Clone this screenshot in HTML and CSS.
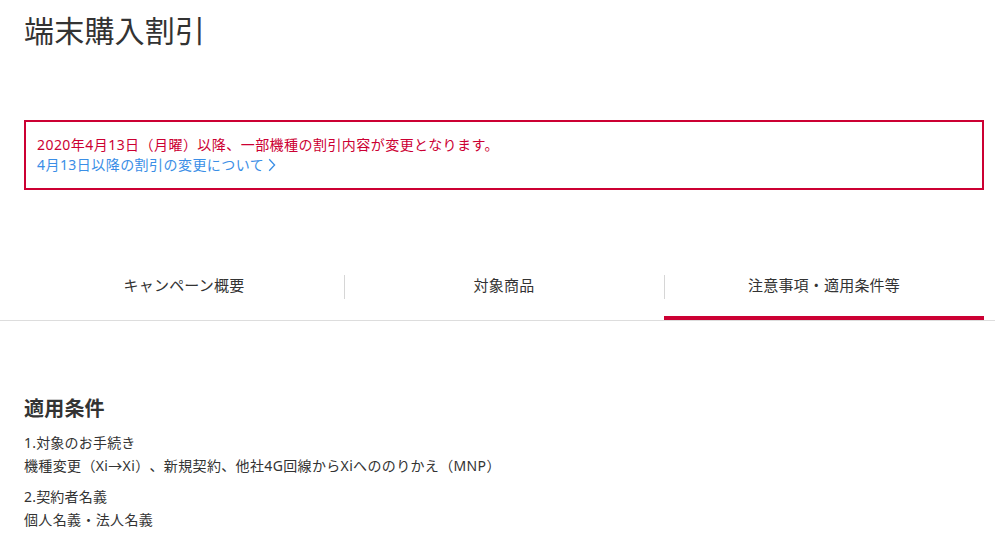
FILE: index.html
```html
<!DOCTYPE html>
<html lang="ja">
  <head>
    <meta charset="UTF-8" />
    <meta name="viewport" content="width=device-width, initial-scale=1.0" />
    <link rel="stylesheet" href="styles.css">
    <title>端末購入割引</title>
  </head>
  <body>
    <div class="page">
      <h1 class="title">端末購入割引</h1>

      <div class="notice">
        <p class="notice-text">2020年4月13日（月曜）以降、一部機種の割引内容が変更となります。</p>
        <a class="notice-link" href="#">4月13日以降の割引の変更について<svg class="chevron" width="8" height="14" viewBox="0 0 8 14"><path d="M1.2 1.2 L6.6 7 L1.2 12.8" fill="none" stroke="currentColor" stroke-width="1.3"/></svg></a>
      </div>
    </div>

    <div class="tabs-bar">
      <ul class="tabs">
        <li class="tab">キャンペーン概要</li>
        <li class="tab">対象商品</li>
        <li class="tab active">注意事項・適用条件等</li>
      </ul>
    </div>

    <div class="page">
      <section class="conditions">
        <h2 class="section-title">適用条件</h2>
        <dl class="cond-list">
          <dt>1.対象のお手続き</dt>
          <dd>機種変更（Xi→Xi）、新規契約、他社4G回線からXiへののりかえ（MNP）</dd>
          <dt>2.契約者名義</dt>
          <dd>個人名義・法人名義</dd>
        </dl>
      </section>
    </div>
  </body>
</html>
```

FILE: styles.css
```css
body {
  margin: 0;
  font-family: "Noto Sans", "Noto Sans CJK JP", sans-serif;
  color: #333;
  background: #fff;
  letter-spacing: 0.2px;
  text-spacing-trim: space-all;
}

.page {
  width: 960px;
  margin-left: 24px;
}

.title {
  margin: 0;
  padding-top: 11px;
  font-size: 30px;
  font-weight: normal;
  line-height: 40px;
}

.notice {
  margin-top: 69px;
  padding: 13px 11px;
  border: 2px solid #cc0033;
  font-size: 14px;
  line-height: 20px;
  letter-spacing: 0.45px;
}

.notice-text {
  margin: 0;
  color: #cc0033;
}

.notice-link {
  display: inline-flex;
  align-items: center;
  gap: 4px;
  color: #3a8ee6;
  text-decoration: none;
}

.tabs-bar {
  margin-top: 72px;
  border-bottom: 1px solid #dddddd;
}

.tabs {
  display: flex;
  width: 960px;
  margin: 0 0 0 24px;
  padding: 0;
  list-style: none;
}

.tab {
  position: relative;
  flex: 1;
  padding: 13px 0 21px;
  border-bottom: 4px solid transparent;
  text-align: center;
  font-size: 15px;
  line-height: 20px;
}

.tab + .tab::before {
  content: "";
  position: absolute;
  left: 0;
  top: 13px;
  height: 24px;
  border-left: 1px solid #d6d6d6;
}

.tab.active {
  border-bottom-color: #cc0033;
}

.conditions {
  padding-top: 74px;
}

.section-title {
  margin: 0;
  font-size: 20px;
  line-height: 28px;
  font-weight: bold;
}

.cond-list {
  margin: 8px 0 0;
  font-size: 14px;
  line-height: 23px;
}

.cond-list dt {
  margin: 0;
}

.cond-list dd {
  margin: 0 0 8px;
  letter-spacing: 0.35px;
}
```
